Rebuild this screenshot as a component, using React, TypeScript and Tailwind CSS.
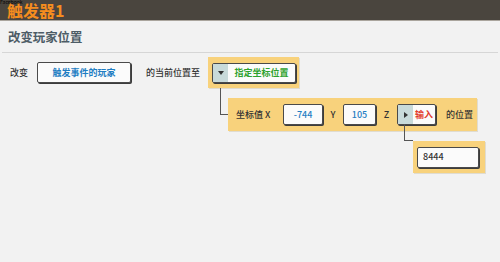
import React from "react";

const font = { fontFamily: '"Noto Sans CJK SC", "Noto Sans", sans-serif' };

function Box({ w, children, className = "" }: { w: string; children?: React.ReactNode; className?: string }) {
  return (
    <div
      className={`${w} h-[21px] flex items-center justify-center border border-[#4a4a4a] rounded-[2px] bg-[#fbfbfb] shadow-[1px_1px_0_#3c3c3c] ${className}`}
    >
      {children}
    </div>
  );
}

export default function App() {
  return (
    <div className="relative w-[500px] h-[262px] bg-[#f2f2f2] overflow-hidden" style={font}>
      <div className="absolute left-0 top-[-1px] text-[5px] leading-[6px] text-black z-10">Facebook</div>
      <div className="h-[21px] bg-[#4a453e] border-b border-[#aaa59d] flex items-center pl-[7px]">
        <span className="text-[16px] leading-[16px] font-bold text-[#f68d1e]">触发器1</span>
      </div>
      <div className="h-[31px] flex items-center pl-[8px] pt-[1px]">
        <span className="text-[12.4px] font-bold text-[#4d5c66]">改变玩家位置</span>
      </div>
      <div className="mx-[2px] h-px bg-[#d6d6d6]" />

      {/* Row 1 */}
      <div className="mt-[4px] flex items-center pl-[10px] text-[9px] font-medium text-[#333]">
        <span className="w-[27px]">改变</span>
        <Box w="w-[94px]" className="h-[20px]">
          <span className="font-bold text-[#1f7ec3]">触发事件的玩家</span>
        </Box>
        <span className="ml-[15px] w-[62px]">的当前位置至</span>
        <div className="w-[91px] h-[31px] bg-[#f8d27c] flex items-center pl-[4px] shadow-[1px_1px_0_#e0dcd0]">
          <div className="w-[84px] h-[20px] flex border border-[#4a4a4a] rounded-[2px] bg-[#fbfbfb] shadow-[1px_1px_0_#3c3c3c] overflow-hidden">
            <div className="w-[15px] bg-[#c8dada] flex items-center justify-center">
              <svg width="6" height="4" viewBox="0 0 6 4"><path d="M0 0H6L3 4Z" fill="#333" /></svg>
            </div>
            <div className="flex-1 flex items-center justify-center">
              <span className="font-bold text-[#2ea22e]">指定坐标位置</span>
            </div>
          </div>
        </div>
      </div>

      {/* Row 2 */}
      <div className="mt-[10px] flex items-start pl-[220px] text-[9px] font-medium text-[#333]">
        <div className="w-[8px] h-[27px] mt-[-10px] border-l border-b border-[#555]" />
        <div className="w-[249px] h-[33px] bg-[#f8d27c] flex items-center pl-[8px] shadow-[1px_1px_0_#e0dcd0]">
          <span className="w-[37px] whitespace-nowrap">坐标值 X</span>
          <Box w="w-[40px] ml-[10px]">
            <span className="text-[#1f7ec3]">-744</span>
          </Box>
          <span className="w-[20px] text-center">Y</span>
          <Box w="w-[33px]">
            <span className="text-[#1f7ec3]">105</span>
          </Box>
          <span className="w-[21px] text-center">Z</span>
          <div className="w-[39px] h-[21px] flex border border-[#4a4a4a] rounded-[2px] bg-[#fbfbfb] shadow-[1px_1px_0_#3c3c3c] overflow-hidden">
            <div className="w-[15px] bg-[#c8dada] flex items-center justify-center">
              <svg width="4" height="6" viewBox="0 0 4 6"><path d="M0 0V6L4 3Z" fill="#333" /></svg>
            </div>
            <div className="flex-1 flex items-center justify-center">
              <span className="font-bold text-[#e23a2c]">输入</span>
            </div>
          </div>
          <span className="ml-[10px]">的位置</span>
        </div>
      </div>

      {/* Row 3 */}
      <div className="mt-[10px] flex items-start pl-[404px] text-[9px] font-medium text-[#333]">
        <div className="w-[9px] h-[17px] mt-[-17px] border-l border-b border-[#555]" />
        <div className="w-[72px] h-[32px] bg-[#f8d27c] flex items-center pl-[4px] shadow-[1px_1px_0_#e0dcd0]">
          <div className="w-[62px] h-[21px] flex items-center pl-[5px] border border-[#4a4a4a] rounded-[2px] bg-[#fbfbfb] shadow-[1px_1px_0_#3c3c3c]">
            <span>8444</span>
          </div>
        </div>
      </div>
    </div>
  );
}
